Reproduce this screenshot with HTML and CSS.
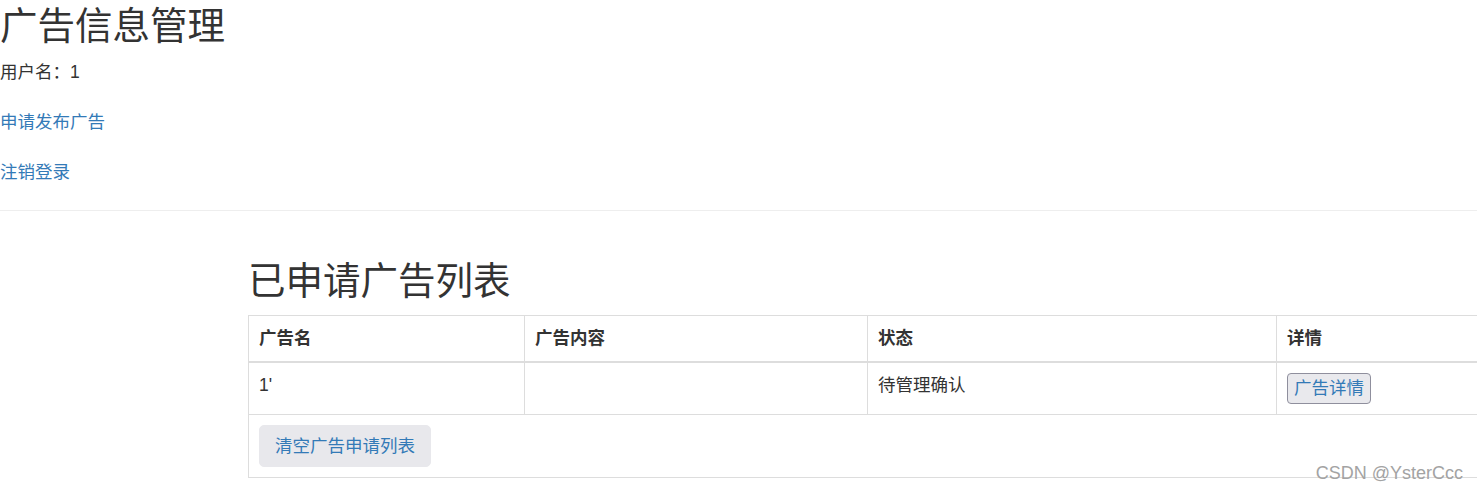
FILE: index.html
```html
<!DOCTYPE html>
<html lang="zh-CN">
<head>
<meta charset="utf-8">
<title>广告信息管理</title>
<link rel="stylesheet" href="styles.css">
</head>
<body>
<header class="top">
  <h1 class="title">广告信息管理</h1>
  <div class="user">用户名：1</div>
  <a class="link" href="#">申请发布广告</a>
  <a class="link" href="#">注销登录</a>
</header>
<hr class="rule">
<main class="main">
  <h2 class="subtitle">已申请广告列表</h2>
  <table class="grid">
    <colgroup>
      <col class="c1"><col class="c2"><col class="c3"><col class="c4">
    </colgroup>
    <thead>
      <tr><th>广告名</th><th>广告内容</th><th>状态</th><th>详情</th></tr>
    </thead>
    <tbody>
      <tr><td>1'</td><td></td><td>待管理确认</td><td><button class="detail">广告详情</button></td></tr>
      <tr><td colspan="4"><button class="clear">清空广告申请列表</button></td></tr>
    </tbody>
  </table>
</main>
<div class="mark">CSDN @YsterCcc</div>
</body>
</html>
```
FILE: styles.css
```css
html, body {
  margin: 0;
  padding: 0;
  overflow: hidden;
}
body {
  font-family: "Liberation Sans", "Noto Sans CJK SC", sans-serif;
  font-size: 17.5px;
  line-height: 25px;
  color: #333;
  background: #fff;
  width: 1477px;
  height: 492px;
  position: relative;
}
.top {
  display: flex;
  flex-direction: column;
  align-items: flex-start;
  gap: 25px;
  padding-top: 6px;
}
.title, .subtitle {
  font-size: 37.5px;
  line-height: 41px;
  font-weight: 400;
  margin: 0;
}
.title {
  margin-bottom: -12px;
}
.link {
  color: #337ab7;
  text-decoration: none;
}
.rule {
  margin: 25px 0 0;
  border: 0;
  border-top: 1px solid #eee;
  height: 0;
}
.main {
  padding: 50px 0 0 248px;
}
.subtitle {
  margin-bottom: 13px;
}
.grid {
  border-collapse: collapse;
  table-layout: fixed;
  width: 1260px;
  border: 1px solid #ddd;
}
.c1 { width: 276px; }
.c2 { width: 343px; }
.c3 { width: 409px; }
.c4 { width: 232px; }
.grid th, .grid td {
  border: 1px solid #ddd;
  padding: 10px;
  text-align: left;
  vertical-align: top;
  line-height: 25px;
}
.grid th {
  font-weight: bold;
  border-bottom: 2.5px solid #ddd;
}
.detail {
  font-family: inherit;
  font-size: 17.5px;
  line-height: 25px;
  color: #337ab7;
  background: #e9e9ed;
  border: 1px solid #8f8f9d;
  border-radius: 4px;
  padding: 2px 6px;
  margin: 0;
}
.clear {
  font-family: inherit;
  font-size: 17.5px;
  line-height: 25px;
  color: #337ab7;
  background: #e8e8ec;
  border: 1px solid #e8e8ec;
  border-radius: 5px;
  padding: 7.5px 15px;
  margin: 0;
}
.mark {
  position: absolute;
  right: 14px;
  bottom: 9px;
  font-size: 18px;
  line-height: 20px;
  color: #a3a3a3;
  font-family: "Liberation Sans", sans-serif;
}
```
